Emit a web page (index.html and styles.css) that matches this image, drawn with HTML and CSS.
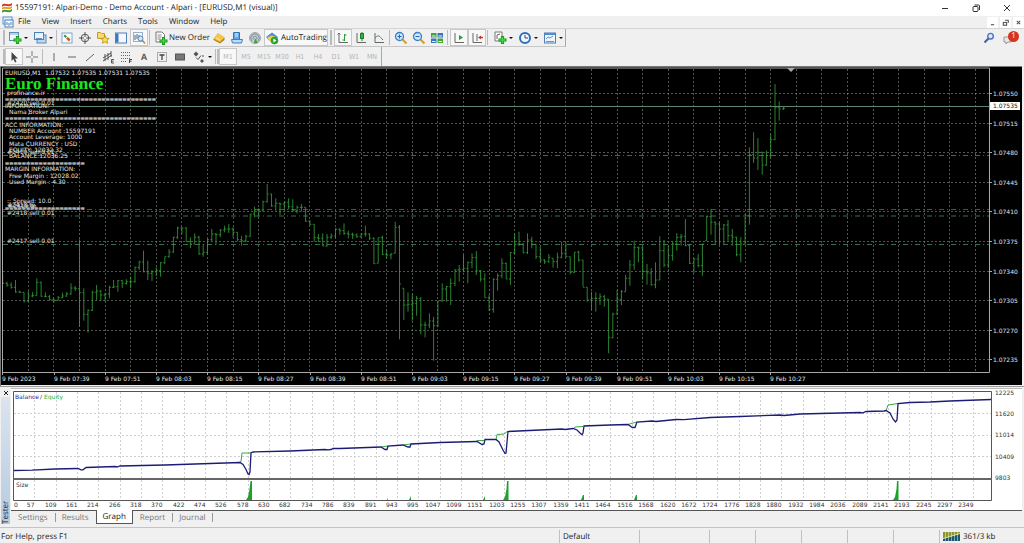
FILE: index.html
```html
<!DOCTYPE html>
<html lang="en">
<head>
<meta charset="utf-8">
<title>15597191: Alpari-Demo - Demo Account - Alpari - [EURUSD,M1 (visual)]</title>
<link rel="stylesheet" href="styles.css">
</head>
<body>
<header class="titlebar">
  <svg class="logo" viewBox="0 0 12 12"><path d="M1 3C4 0 7 4 11 1v2C8 6 4 2 1 5z" fill="#d8352a"/><path d="M1 6C4 3 7 7 11 4v2C8 9 4 5 1 8z" fill="#e8a21c"/><path d="M1 9C4 6 7 10 11 7v2C8 12 4 8 1 11z" fill="#3f9a3a"/></svg>
  <h1 class="title">15597191: Alpari-Demo - Demo Account - Alpari - [EURUSD,M1 (visual)]</h1>
  <div class="window-buttons">
    <button class="win" aria-label="Minimize"><svg viewBox="0 0 10 10"><path d="M2 5.500h6"/></svg></button>
    <button class="win" aria-label="Restore"><svg viewBox="0 0 10 10"><rect x="2" y="3.500" width="5" height="5" rx="1"/><path d="M3.500 2h4a1 1 0 0 1 1 1v4"/></svg></button>
    <button class="win" aria-label="Close"><svg viewBox="0 0 10 10"><path d="M2 2l6 6M8 2L2 8"/></svg></button>
  </div>
</header>
<nav class="menubar">
  <svg class="menu-logo" viewBox="0 0 12 12"><rect x="1" y="1" width="9" height="7" fill="#e6f1fb" stroke="#5b96cf"/><rect x="3" y="4" width="8" height="7" fill="#fff" stroke="#3f7fc0"/><path d="M5 9V6M7 10V7M9 9V6" stroke="#3f7fc0"/></svg>
  <button class="menu">File</button><button class="menu">View</button><button class="menu">Insert</button><button class="menu">Charts</button><button class="menu">Tools</button><button class="menu">Window</button><button class="menu">Help</button>
  <div class="child-buttons">
    <button class="child" aria-label="Minimize chart"><svg viewBox="0 0 10 10"><path d="M3.500 7h3"/></svg></button>
    <button class="child" aria-label="Restore chart"><svg viewBox="0 0 10 10"><rect x="3" y="5" width="3" height="2.500"/><path d="M4.500 3h3v2.500"/></svg></button>
    <button class="child" aria-label="Close chart"><svg viewBox="0 0 10 10"><path d="M3.500 3.500l3 3M6.500 3.500l-3 3"/></svg></button>
  </div>
</nav>

<div class="toolrows">
<div class="toolrow">
 <div class="toolbar">
  <span class="grip"></span>
  <button class="tool drop" aria-label="New chart"><svg viewBox="0 0 14 14"><rect x="1.500" y="1.500" width="9" height="8" fill="#eef5fc" stroke="#5d88b8"/><path d="M2 3h8" stroke="#88b0d8"/><path d="M9.500 5v8M5.500 9h8" stroke="#18951c" stroke-width="3.200"/><path d="M9.500 6v6M6.500 9h6" stroke="#3ed83c" stroke-width="1.600"/></svg><i class="arrow"></i></button>
  <button class="tool drop" aria-label="Profiles"><svg viewBox="0 0 14 14"><rect x="4" y="4" width="9" height="8" fill="#bdd7f0" stroke="#5d88b8"/><rect x="1.500" y="1.500" width="9" height="7" fill="#eaf3fb" stroke="#4c80b8"/><path d="M3 7.500h6" stroke="#5b8fc6"/></svg><i class="arrow"></i></button>
  <span class="sep narrow"></span>
  <button class="tool" aria-label="Market watch"><svg viewBox="0 0 14 14"><rect x="2" y="2" width="10" height="10" fill="#f7fbff" stroke="#7fa8d2"/><path d="M3.500 5l1.500-1.500L7 5.500 5.500 7z" fill="#2f9e3a"/><path d="M6 7.500L8 6l2.500 2.500L9 10.500z" fill="#d0532c"/></svg></button>
  <button class="tool" aria-label="Data window"><svg viewBox="0 0 14 14" fill="none" stroke="#555"><circle cx="7" cy="7" r="3.800"/><path d="M7 1v5M7 8v5M1 7h5M8 7h5"/></svg></button>
  <button class="tool" aria-label="Navigator"><svg viewBox="0 0 14 14"><path d="M1.500 1.500h3l1 1h3v5h-7z" fill="#f6d978" stroke="#c79a27"/><path d="M9 4.500l1.200 2.700 2.900.3-2.200 1.900.7 2.900L9 10.800l-2.600 1.500.7-2.900-2.200-1.900 2.900-.3z" fill="#ffe045" stroke="#b78b12" stroke-width=".8"/></svg></button>
  <button class="tool" aria-label="Terminal"><svg viewBox="0 0 14 14"><rect x="1.500" y="2" width="11" height="10" fill="#f4f8fd" stroke="#4f7fb8"/><path d="M2 2.500h2.500v9H2z" fill="#3f78bd"/></svg></button>
  <button class="tool on" aria-label="Strategy tester"><svg viewBox="0 0 14 14"><rect x="1.500" y="1.500" width="9" height="9" fill="#f7fafd" stroke="#9ab0c8"/><path d="M3 9V4M5 8V3M7 9V4" stroke="#567"/><circle cx="8.500" cy="7.500" r="2.500" fill="#cfe5fa" stroke="#5289c4"/><path d="M10.500 9.500l2.500 3" stroke="#c58c2a" stroke-width="1.500"/></svg></button>
  <span class="sep"></span>
  <button class="tool order"><svg viewBox="0 0 14 14"><path d="M2 1h6l2.500 2.500V11H2z" fill="#fff" stroke="#777"/><path d="M3.500 4h4M3.500 6h4M3.500 8h3" stroke="#888"/><path d="M9.500 6v8M5.500 10h8" stroke="#18951c" stroke-width="3"/><path d="M9.500 7v6M6.500 10h6" stroke="#3ed83c" stroke-width="1.400"/></svg>New Order</button>
  <button class="tool" aria-label="MetaEditor"><svg viewBox="0 0 14 14"><path d="M1.500 8L6 2.500l6.500 4V9L8 12.500 1.500 9z" fill="#b9801a"/><path d="M1.500 7.500L6 2l6.500 4.500L8 11z" fill="#f5c544"/><path d="M4 7l4 2" stroke="#fff0b0"/></svg></button>
  <button class="tool" aria-label="Options"><svg viewBox="0 0 14 14"><path d="M3.500 1.500h6v7h-6z" fill="#5fa9e8" stroke="#2f74b5"/><path d="M5 3h3M5 5h3" stroke="#e5f3ff"/><path d="M1.500 8.500h11l-1 3.500h-9z" fill="#bcdcf7" stroke="#3e80bf"/></svg></button>
  <button class="tool" aria-label="Signals"><svg viewBox="0 0 14 14" fill="none"><circle cx="7" cy="7" r="5.500" fill="#c9cfd3" stroke="#a0a8ad"/><path d="M4 10a4.200 4.200 0 1 1 6 0M5.500 8.500a2 2 0 1 1 3 0" stroke="#7b8b93"/><path d="M7 7l3 5H6z" fill="#39a04a"/></svg></button>
  <button class="tool auto on"><svg viewBox="0 0 14 14"><path d="M1 6l6-4.500L13 6l-3 3.500H4z" fill="#4b8fd2"/><path d="M2 6.500l5-2 5 2-4 4H5z" fill="#f3cf52"/><circle cx="9.500" cy="9.500" r="3.800" fill="#2da336"/><path d="M8.400 7.500l3 2-3 2z" fill="#fff"/></svg>AutoTrading</button>
  <span class="grip tail"></span>
  <button class="tool on" aria-label="Bar chart"><svg viewBox="0 0 14 14" fill="none" stroke="#666"><path d="M3 2v9.500h9M1.500 3.500L3 2l1.500 1.500"/><path d="M8.500 3v7M8.500 4h2M6.500 9h2" stroke="#2a9a38"/></svg></button>
  <button class="tool" aria-label="Candlesticks"><svg viewBox="0 0 14 14" fill="none" stroke="#666"><path d="M3 2v9.500h9"/><path d="M8 1v9" stroke="#1d7f2a"/><rect x="6.500" y="2.500" width="3" height="5" fill="#2fb33c" stroke="#1d7f2a"/></svg></button>
  <button class="tool" aria-label="Line chart"><svg viewBox="0 0 14 14" fill="none" stroke="#666"><path d="M3 2v9.500h9"/><path d="M3 7c4-4 4-2 8 2" stroke="#3a8a48"/></svg></button>
  <span class="sep"></span>
  <button class="tool" aria-label="Zoom in"><svg viewBox="0 0 14 14"><path d="M8.500 8.500l4 4" stroke="#d1a22e" stroke-width="2.200"/><circle cx="5.500" cy="5.500" r="4" fill="#cfe6fb" stroke="#3f80c4" stroke-width="1.300"/><path d="M3.500 5.500h4M5.500 3.500v4" stroke="#2468b0"/></svg></button>
  <button class="tool" aria-label="Zoom out"><svg viewBox="0 0 14 14"><path d="M8.500 8.500l4 4" stroke="#d1a22e" stroke-width="2.200"/><circle cx="5.500" cy="5.500" r="4" fill="#cfe6fb" stroke="#3f80c4" stroke-width="1.300"/><path d="M3.500 5.500h4" stroke="#2468b0"/></svg></button>
  <button class="tool" aria-label="Tile windows"><svg viewBox="0 0 14 14"><path d="M1 2h5.500v4.500H1zM7.500 7.500H13V12H7.500z" fill="#3fa53a"/><path d="M7.500 2H13v4.500H7.500zM1 7.500h5.500V12H1z" fill="#3b73c0"/><path d="M2 4.500h3.500v1H2zM8.500 4.500H12v1H8.500zM2 10h3.500v1H2zM8.500 10H12v1H8.500z" fill="#e9f4ff"/></svg></button>
  <span class="sep"></span>
  <button class="tool on" aria-label="Auto scroll"><svg viewBox="0 0 14 14" fill="none" stroke="#666"><path d="M3 2v9.500h9"/><path d="M7 4l4 2.500L7 9z" fill="#2a9a38" stroke="none"/></svg></button>
  <button class="tool on" aria-label="Chart shift"><svg viewBox="0 0 14 14" fill="none" stroke="#666"><path d="M3 2v9.500h9M7 3v7"/><path d="M8 6.500l3-2v1.300h2v1.400h-2v1.300z" fill="#c0392b" stroke="none"/></svg></button>
  <span class="sep"></span>
  <button class="tool drop" aria-label="Indicators"><svg viewBox="0 0 14 14"><path d="M2 1h7v9H2z" fill="#fff" stroke="#777"/><path d="M4 8V4l3-1" stroke="#666" fill="none"/><path d="M9.500 5v8M5.500 9h8" stroke="#18951c" stroke-width="3.200"/><path d="M9.500 6v6M6.500 9h6" stroke="#3ed83c" stroke-width="1.600"/></svg><i class="arrow"></i></button>
  <button class="tool drop" aria-label="Periods"><svg viewBox="0 0 14 14"><circle cx="7" cy="7" r="5" fill="#f5faff" stroke="#2d6fbd" stroke-width="2"/><path d="M7 4v3h3" fill="none" stroke="#345"/></svg><i class="arrow"></i></button>
  <button class="tool drop" aria-label="Templates"><svg viewBox="0 0 14 14"><rect x="1.500" y="2" width="11" height="10" fill="#eef5fc" stroke="#4f7fb8"/><path d="M2 3h10" stroke="#4f8fd0" stroke-width="2"/><path d="M3 8l2-2 2 1 3-2M3 10.500h8" fill="none" stroke="#6a94c0"/></svg><i class="arrow"></i></button>
 </div>
 <div class="corner">
  <button class="tool" aria-label="Search"><svg viewBox="0 0 14 14"><path d="M6.500 7.500l-4 4" stroke="#3d63b0" stroke-width="2.200"/><circle cx="8.500" cy="5.200" r="2.800" fill="#dfeafa" stroke="#4a74c0" stroke-width="1.400"/></svg></button>
  <button class="tool" aria-label="1 notification"><svg viewBox="0 0 14 14"><path d="M1 6h7v5H5l-2 2v-2H1z" fill="#e8e8e8" stroke="#999"/></svg><b class="badge">1</b></button>
 </div>
</div>
<div class="toolrow">
 <div class="toolbar lines">
  <span class="grip"></span>
  <button class="tool on" aria-label="Cursor"><svg viewBox="0 0 14 14"><path d="M4.500 2v9l2-2 1.500 3.500 1.500-.7L8 8.500h3z" fill="#444"/></svg></button>
  <button class="tool" aria-label="Crosshair"><svg viewBox="0 0 14 14" stroke="#777"><path d="M7 1v5M7 8v5M1 7h5M8 7h5"/></svg></button>
  <span class="sep"></span>
  <button class="tool" aria-label="Vertical line"><svg viewBox="0 0 14 14" stroke="#666"><path d="M7 3v8"/></svg></button>
  <button class="tool" aria-label="Horizontal line"><svg viewBox="0 0 14 14" stroke="#666"><path d="M3 7h8"/></svg></button>
  <button class="tool" aria-label="Trendline"><svg viewBox="0 0 14 14" stroke="#666"><path d="M3 11l8-7"/></svg></button>
  <button class="tool" aria-label="Equidistant channel"><svg viewBox="0 0 14 14" stroke="#555" fill="none"><path d="M2 8l8-5M2 11l9-6M4 4v7M7 3v7M10 1v6M13 9.500h-2.500V13H13M10.500 11.200h2"/></svg></button>
  <button class="tool" aria-label="Fibonacci"><svg viewBox="0 0 14 14" stroke="#666" fill="none"><path d="M2 2.500h10M2 5.500h10M2 8.500h10M2 11.500h6" stroke-dasharray="1 1"/><path d="M10.500 13V9.500H13M10.500 11.200h2" stroke="#444"/></svg></button>
  <button class="tool letter">A</button>
  <button class="tool" aria-label="Text label"><svg viewBox="0 0 14 14" stroke="#666" fill="none"><rect x="2.500" y="2.500" width="9" height="9" stroke-dasharray="1 1"/><path d="M4.500 5h5M7 5v5" stroke="#444" stroke-width="1.300"/></svg></button>
  <button class="tool" aria-label="Rectangle"><svg viewBox="0 0 14 14"><rect x="2.500" y="4" width="9" height="6" fill="#777" stroke="#555"/></svg></button>
  <button class="tool drop" aria-label="Arrows"><svg viewBox="0 0 14 14" fill="#555"><path d="M1.500 4L4 1.500 6.500 4 4 6.500zM8 11l2-2 2 2-2 2z"/><path d="M4 7.500l2 2 3-4M10 6h2" fill="none" stroke="#555"/></svg><i class="arrow"></i></button>
  <span class="sep narrow"></span><span class="grip"></span>
  <button class="tool period on">M1</button><button class="tool period">M5</button><button class="tool period">M15</button><button class="tool period">M30</button><button class="tool period">H1</button><button class="tool period">H4</button><button class="tool period">D1</button><button class="tool period">W1</button><button class="tool period">MN</button>
 </div>
</div>
</div>

<main>
<section class="price-window" aria-label="EURUSD,M1 chart">
<svg class="price-chart" viewBox="0 66 1024 320">
  <rect class="black" x="1" y="66" width="1021" height="319"/>
  <path class="edge" d="M.5 386V66.500H1022"/>
  <path id="grid" class="grid"/>
  <path class="order-line" d="M3 155.500H989M3 216H989M3 244.500H989"/>
  <path class="stop-line" d="M3 209.500H989"/>
  <path class="bid" d="M3 106.500H989"/>
  <path id="bars" class="bars"/>
  <path class="frame" d="M2.500 372.500V68H989.500V372.500z"/>
  <path id="price-ticks" class="frame"/>
  <path class="marker" d="M787 68h8l-4 4z"/>
  <g class="chart-text">
    <g id="prices"></g>
    <g id="times"></g>
    <text x="5" y="75">EURUSD,M1&#160; 1.07532 1.07535 1.07531 1.07535</text>
    <text x="7" y="95">profinance.ir</text>
    <text x="7" y="105">#2420 sell 0.01</text>
    <text x="5" y="108">INFORMATION:</text>
    <text x="9" y="114">Nama Broker Alpari</text>
    <text x="5" y="127">ACC INFORMATION:</text>
    <text x="9" y="133">NUMBER Account :15597191</text>
    <text x="9" y="139">Account Leverage: 1000</text>
    <text x="9" y="146">Mata CURRENCY : USD</text>
    <text x="9" y="152">EQUITY: 12032.32</text>
    <text x="7" y="154">#2419 sell 0.01</text>
    <text x="9" y="158">BALANCE:12036.25</text>
    <text x="5" y="171">MARGIN INFORMATION:</text>
    <text x="9" y="178">Free Margin : 12028.02</text>
    <text x="9" y="184">Used Margin : 4.30</text>
    <text x="7" y="203">:: Spread: 10.0</text>
    <text x="7" y="207">#2418 tp</text>
    <text x="8" y="208">#2419 tp</text>
    <text x="7" y="215">#2418 sell 0.01</text>
    <text x="7" y="243">#2417 sell 0.01</text>
  </g>
  <g class="rules">
    <text x="5" y="101">====================================</text>
    <text x="5" y="120">====================================</text>
    <text x="5" y="165">===================</text>
    <text x="5" y="210">===================</text>
  </g>
  <text class="brand" x="5" y="89">Euro Finance</text>
  <rect class="bid-box" x="990" y="102" width="30" height="8"/>
  <text class="bid-text" x="993" y="108">1.07535</text>
</svg>
</section>

<section class="tester">
  <div class="side"><button class="close" aria-label="Close tester"><svg viewBox="0 0 6 6"><path d="M1 1l4 4M5 1L1 5"/></svg></button><span class="side-label">Tester</span></div>
  <div class="tester-body">
    <svg class="balance-chart" viewBox="11 389 1011 121">
      <path id="balance-grid" class="balance-grid"/>
      <path class="equity" d="M239 462.500l2-1 1-8.500H251M381 447l7-1M403 445l8-1M477 441.500v-1h7M496 439.500l1-5 7-.5 4-3M573 429l2-2 8-.5M628 424.500l5-1.500 4-1M886 411l2-6 10-1.500"/>
      <polyline class="balance" points="14,470.5 32,470.2 55,469 78,468.5 81,469.8 83,469.8 86,467.500 115,466.500 117,467 120,466 165,465 240,462.500 243,464.500 246,469.500 248,474 249,474.500 250,472 251,453 253,452 290,451 325,449.500 328,449.800 331,449.500 333,448.500 340,448.500 381,447 385,449.500 387,449.500 388,446 403,445 408,447 410,447 411,444 440,442.500 477,441.500 482,444.500 484,444 485,439.500 496,439.500 499,442 503,450 505,453.500 506,453 508,431.500 540,430 562,429 565,429.500 573,428.500 577,430 580,433 582,434.800 583,433 584,426 610,425 628,424.500 632,427.300 635,427.500 637,422 652,421 656,421.500 676,419.500 684,419.700 710,417.500 740,416.500 780,415 784,415.500 800,414 860,412.500 863,412.800 866,411.500 884,411 886,410.500 890,413 893,419 895.500,422 897,420 898,403.500 910,402.500 930,402 950,401 991,399.500"/>
      <path class="lots" d="M246 500l2-3 1.500-8 1-8h1.500v19zM503 500l2-3 1.500-8 .5-8h1.500v19zM893 500l2-3 1.500-8 .5-8h1.500v19zM387 500l1-2v2zM409 500l2-4v4zM483 500l2-4v4zM581 500l2-5h1v5zM634 500l2-5h1v5z"/>
      <path class="box" d="M13.500 500.500V391.500H991.500V500.500z"/>
      <path class="divider" d="M13 479H992"/>
      <g class="axis-text">
        <text class="balance-name" x="15" y="399">Balance</text><text x="40" y="399">/</text><text class="equity-name" x="44" y="399">Equity</text>
        <text x="16" y="487">Size</text>
        <text x="14" y="507">0</text>
        <g id="trades" text-anchor="end"></g>
        <text x="995" y="395">12225</text><text x="995" y="416">11620</text><text x="995" y="437">11014</text><text x="995" y="459">10409</text><text x="995" y="480">9803</text>
      </g>
    </svg>
    <div class="tabs">
      <button class="tab">Settings</button><button class="tab">Results</button><button class="tab current">Graph</button><button class="tab">Report</button><button class="tab">Journal</button>
    </div>
  </div>
</section>
</main>

<footer class="status">
  <span class="help">For Help, press F1</span>
  <span class="cell wide">Default</span><span class="cell c70"></span><span class="cell"></span><span class="cell"></span><span class="cell"></span><span class="cell"></span><span class="cell"></span>
  <span class="cell traffic"><svg viewBox="0 0 17 9"><rect width="17" height="9" fill="#8c962a"/><path d="M0 7l17-5v7H0z" fill="#1e5673"/><path d="M0 6.500l17-5" stroke="#d8df90"/><path d="M2.500 0v9M5.500 0v9M8.500 0v9M11.500 0v9M14.500 0v9" stroke="#efefef" stroke-width=".5"/></svg>361/3 kb</span>
</footer>
<script src="chart.js"></script>
</body>
</html>
```
FILE: styles.css
```css
* { box-sizing: border-box; }
body {
  margin: 0;
  min-height: 100vh;
  display: flex;
  flex-direction: column;
  background: #f0f0f0;
  color: #222;
  font: 8px/10px "Open Sans", "Noto Sans", sans-serif;
  text-rendering: geometricPrecision;
}
button {
  border: 0;
  padding: 0;
  background: none;
  color: inherit;
  font: inherit;
  text-rendering: inherit;
}
svg { display: block; }

.titlebar {
  display: flex;
  align-items: center;
  height: 16px;
  background: #fff;
}
.logo { width: 12px; height: 12px; margin-left: 1px; }
.title { margin: 0 0 0 2px; font-size: 8px; font-weight: 400; }
.window-buttons { display: flex; margin: 0 2px 0 auto; }
.win { width: 31px; height: 16px; display: grid; place-items: center; }
.win svg { width: 10px; height: 10px; fill: none; stroke: #333; }

.menubar {
  display: flex;
  align-items: center;
  height: 13px;
  border-bottom: 1px solid #d5d5d5;
}
.menu-logo { width: 12px; height: 12px; margin: 0 4px 0 2px; }
.menu { margin-right: 11px; }
.child-buttons { display: flex; gap: 2px; margin-left: auto; }
.child { width: 11px; height: 11px; background: #fff; }
.child svg { width: 11px; height: 11px; fill: none; stroke: #555; }

.toolrow { display: flex; height: 18px; }
.toolrow:last-child { height: 19px; }
.toolbar {
  display: flex;
  align-items: center;
  padding-left: 3px;
  border-right: 1px solid #a8a8a8;
  border-bottom: 1px solid #c6c6c6;
}
.toolbar.lines { border-bottom: 0; }
.grip { width: 2px; height: 15px; border: solid #bbb; border-width: 0 1px; }
.grip.tail { margin: 0 2px; }
.tool {
  position: relative;
  width: 18px;
  height: 17px;
  display: flex;
  align-items: center;
  justify-content: center;
}
.tool svg { width: 14px; height: 14px; flex: none; }
.tool.drop { width: 25px; gap: 2px; }
.tool.on { background: #f8f8f8; border: 1px solid #c8c8c8; }
.tool.order { width: 58px; gap: 1px; justify-content: flex-start; padding-left: 2px; }
.tool.auto { width: 64px; gap: 2px; }
.arrow { border: 2px solid transparent; border-top-color: #111; margin-top: 2px; }
.sep { width: 1px; height: 15px; margin: 0 2px 0 1px; background: #bbb; }
.sep.narrow { margin: 0 1px; }
.letter { color: #555; font: 700 9px/10px "Liberation Sans", sans-serif; }
.period { color: #b4b4b4; font: 7px/10px "DejaVu Sans Condensed", "DejaVu Sans", sans-serif; }
.corner { display: flex; align-items: center; margin-left: auto; padding-right: 5px; gap: 3px; }
.badge {
  position: absolute;
  right: 0;
  top: 1px;
  width: 11px;
  height: 11px;
  border-radius: 50%;
  background: #d2361f;
  color: #fff;
  font-weight: 400;
  text-align: center;
}

.price-chart { width: 100%; height: auto; }
.black { fill: #000; }
.edge { fill: none; stroke: #777; }
.grid { fill: none; stroke: #727d72; stroke-width: 1; stroke-dasharray: 2 2; opacity: .7; }
.order-line, .stop-line { fill: none; stroke: #327250; stroke-dasharray: 5 3 1 3; }
.stop-line { stroke: #a02c34; }
.bid { stroke: #5f8472; }
.bars { fill: none; stroke: #37a33b; stroke-width: 1; opacity: .8; }
.frame { fill: none; stroke: #a9a9a9; }
.marker { fill: #a9a9a9; }
.chart-text { fill: #e4e4e4; font: 6px "DejaVu Sans", sans-serif; }
.rules { fill: #bbb; stroke: #bbb; stroke-width: .4; font: 700 5px "DejaVu Sans", sans-serif; }
.brand { fill: #1ee61e; font: 700 17px "Liberation Serif", serif; }
.bid-box { fill: #fff; }
.bid-text { fill: #111; font: 6px "DejaVu Sans", sans-serif; }

.tester { display: flex; padding: 1px 2px 0 0; border-top: 1px solid #999; }
.side {
  width: 11px;
  display: flex;
  flex-direction: column;
  align-items: center;
}
.close { width: 10px; height: 9px; display: grid; place-items: center; }
.close svg { width: 6px; height: 6px; stroke: #222; fill: none; }
.side-label {
  flex: 1;
  width: 9px;
  margin-bottom: 3px;
  background: linear-gradient(#b6cbe2, #dbe4ee);
  writing-mode: vertical-rl;
  transform: rotate(180deg);
  line-height: 9px;
}
.tester-body { flex: 1; }
.balance-chart { width: 100%; height: auto; background: #fff; border-top: 1px solid #bbb; }
.balance-grid { fill: none; stroke: #cfcfcf; stroke-dasharray: 2 2; }
.equity { fill: none; stroke: #3aa843; }
.balance { fill: none; stroke: #1c1c78; stroke-width: 1.3; }
.lots { fill: #1aa32a; }
.box { fill: none; stroke: #555; }
.divider { stroke: #666; stroke-width: 2; }
.axis-text { fill: #333; font: 6px "DejaVu Sans", sans-serif; }
.balance-name { fill: #24249a; }
.equity-name { fill: #2cae36; }

.tabs { display: flex; height: 17px; border-top: 1px solid #555; }
.tab { position: relative; height: 13px; padding: 0 7px; color: #777; }
.tab + .tab::before { content: ""; position: absolute; left: 0; top: 2px; height: 9px; border-left: 1px solid #999; }
.tab:last-child::after { content: ""; position: absolute; right: 0; top: 2px; height: 9px; border-left: 1px solid #999; }
.tab.current {
  margin-top: -1px;
  padding: 0 6px;
  height: 14px;
  background: #fff;
  border: solid #555;
  border-width: 0 1px 1px;
  color: #222;
}
.tab.current::before, .tab.current + .tab::before { content: none; }

.status {
  flex: 1;
  display: flex;
  align-items: stretch;
  border-top: 1px solid #c4c4c4;
  padding-top: 2px;
  line-height: 13px;
}
.help { flex: 1; padding-left: 1px; }
.cell { width: 46px; padding-left: 3px; border-left: 1px solid #c0c0c0; }
.cell.wide { width: 80px; }
.cell.c70 { width: 70px; }
.cell.traffic { width: 85px; display: flex; gap: 3px; }
.traffic svg { width: 17px; height: 9px; margin-top: 2px; }
```
FILE: chart.js
```js
const NS = 'http://www.w3.org/2000/svg';
const byId = id => document.getElementById(id);

function label(parent, x, y, value) {
  const t = document.createElementNS(NS, 'text');
  t.setAttribute('x', x);
  t.setAttribute('y', y);
  t.textContent = value;
  parent.appendChild(t);
}

// Each group: vertical base, then [high, low, close] in thirds of a unit below it.
const groups = [
  [230, [[132,162,160],[155,170,165],[157,176,172],[150,188,186],[182,188,187],[187,217,213],[183,215,198],[186,202,196],[145,197,157],[155,200,199],[187,201,200],[195,212,208],[205,217,211],[198,211,203],[188,204,198],[186,200,192],[160,194,174],[168,183,176],[28,290,188],[175,272,253],[238,308,241],[182,243,187],[165,210,183],[180,213,195],[188,214,192],[167,205,172],[150,174,170],[150,185,152],[150,174,160],[148,164,155],[140,175,155],[110,158,112],[92,120,96],[62,127,125],[92,150,130],[120,153,125],[112,138,122],[97,140,98],[80,102,80],[57,83,66],[20,68,22]]],
  [64, [[488,525,492],[490,510,492],[490,533,533],[520,552,540],[508,540,520],[515,572,570],[540,578,565],[525,572,527],[495,532,510],[507,542,512],[495,520,498],[485,505,495],[480,507,495],[490,520,505],[505,532,527],[515,545,530],[512,535,517],[450,518,450],[428,460,438]]],
  [170, [[115,140,120],[92,125,95],[42,98,72],[72,110,108],[85,122,100],[98,135,102],[95,120,97],[85,118,110],[88,125,122],[107,130,112],[102,125,112],[112,155,154],[150,165,163],[163,215,203],[192,216,205],[190,228,228],[192,230,202],[190,207,198],[175,205,178],[175,195,182],[160,195,190],[182,205,193],[188,207,195],[190,203,200],[190,203,192],[167,200,192],[190,210,205],[202,282,281],[203,280,203],[197,255,253],[240,265,255],[250,268,252],[155,250,172],[165,508,342],[355,450,405],[367,425,403],[372,452,400],[378,437,385],[382,493,465],[455,502,465],[430,475,453]]],
  [210, [[320,452,347],[273,352,273],[220,275,237],[228,275,230],[205,285,220],[178,228,180],[165,215,178],[135,187,175],[155,220,157],[130,175,143],[123,195,182],[180,215,207],[190,263,263],[255,303,298],[205,308,208],[190,242,197],[145,205,160],[158,207,207],[127,225,128],[70,132,103],[65,108,102],[100,130,128],[70,132,90],[80,115,103],[102,147,140],[110,157,150],[148,162,155],[132,158,142],[145,173,155],[128,175,142],[95,145,130],[98,142,140],[140,193,187],[127,188,127],[122,155,150],[150,230,232],[232,275,270],[245,300,265],[247,305,265],[250,285,260],[255,290,268],[268,430,383],[308,385,312],[240,313,268],[240,285,245],[195,245,205],[150,227,165]]],
  [64, [[530,617,550],[548,595,552],[548,647,622],[600,662,627],[612,665,662],[595,673,648],[517,648,560],[528,610,603],[545,612,575],[533,590,540],[507,560,520],[510,545,517],[465,547,545],[540,600,598],[583,627,585],[570,610,605],[540,635,540],[455,530,458],[435,512,475],[472,540,480],[475,540,495],[480,540,483],[468,530,515],[495,545,520],[518,577,572],[520,595,540],[450,542,455],[250,482,272],[205,297,282],[222,318,265],[263,332,303],[260,305,275],[212,280,227],[60,228,130],[112,170,135],[127,137,133]]]
];

let path = '';
let index = 0;
let previous = null;
for (const [base, bars] of groups) {
  for (const [high, low, close] of bars) {
    const x = +(2.7 + index * 25.6 / 6).toFixed(1);
    const [h, l, c] = [high, low, close].map(v => +(base + v / 3).toFixed(1));
    path += `M${x} ${h}V${l}M${x} ${c}h1.5`;
    if (previous !== null) path += `M${x} ${Math.min(Math.max(previous, h), l)}h-1.5`;
    previous = c;
    index++;
  }
}
byId('bars').setAttribute('d', path);

// Price grid
let grid = '';
for (let i = 1; i <= 38; i++) grid += `M${Math.round(2.2 + 25.6 * i) + .5} 69V372`;
let ticks = '';
for (let i = 0; i < 10; i++) {
  const y = Math.round(92.9 + 29.6 * i) + .5;
  grid += `M3 ${y}H989`;
  ticks += `M989 ${y}h3`;
  label(byId('prices'), 993, y + 2, (1.0755 - i * .00035).toFixed(5));
}
byId('grid').setAttribute('d', grid);

['2023','07:39','07:51','08:03','08:15','08:27','08:39','08:51','09:03','09:15','09:27','09:39','09:51','10:03','10:15','10:27'].forEach((time, i) => {
  const x = Math.round(2.4 + 51.2 * i);
  label(byId('times'), x, 381, '9 Feb ' + time);
  ticks += `M${x + .5} 372v3`;
});
byId('price-ticks').setAttribute('d', ticks);

// Balance grid and trade numbers
let lines = 'M14 413.5H991M14 435.5H991M14 456.5H991';
[57,109,161,214,266,318,370,422,474,526,578,630,682,734,786,839,891,943,995,1047,1099,1151,1203,1255,1307,1359,1411,1464,1516,1568,1620,1672,1724,1776,1828,1880,1932,1984,2036,2089,2141,2193,2245,2297,2349].forEach((n, i) => {
  const x = Math.round(34.3 + 21.34 * i) + .5;
  lines += `M${x} 392V500`;
  label(byId('trades'), x, 507, n);
});
byId('balance-grid').setAttribute('d', lines);
```
